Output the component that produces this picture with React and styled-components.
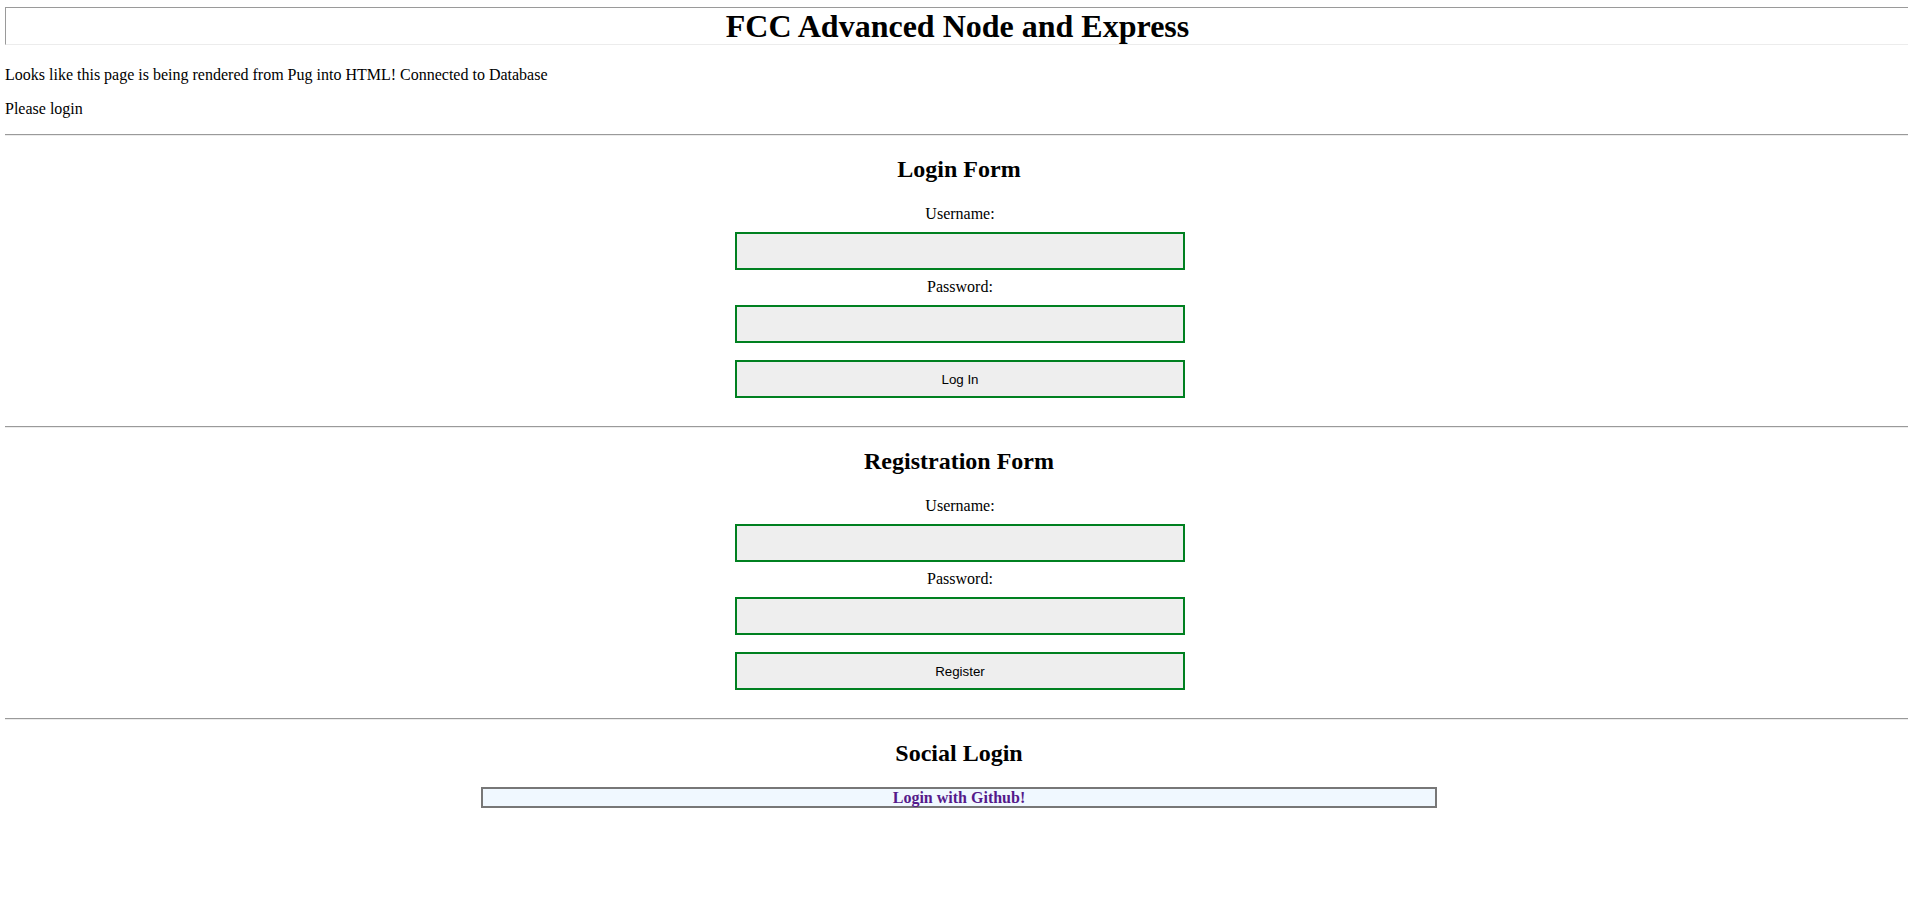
import React from "react";
import styled, { createGlobalStyle } from "styled-components";

const GlobalStyle = createGlobalStyle`
  html, body {
    margin: 0;
    padding: 0;
    background: #fff;
    overflow-x: hidden;
  }
  body {
    font-family: "Liberation Serif", "Times New Roman", serif;
    font-size: 16px;
    color: #000;
  }
`;

const Page = styled.div`
  width: 100vw;
  margin-left: 5px;
  padding-top: 7px;
  padding-bottom: 40px;
`;

const Header = styled.header`
  height: 36px;
  border-top: 1px solid #9a9a9a;
  border-left: 1px solid #9a9a9a;
  border-bottom: 1px solid #ececec;
  border-right: 1px solid #ececec;
  h1 {
    margin: 0;
    font-size: 32px;
    line-height: 36px;
    font-weight: bold;
    text-align: center;
    padding-right: 3px;
  }
`;

const Intro = styled.div`
  display: flex;
  flex-direction: column;
  gap: 16px;
  padding-top: 21px;
  p {
    margin: 0;
    line-height: 18px;
  }
`;

const Divider = styled.hr`
  margin: ${({ $top }) => $top || 0}px 0 0;
  height: 0;
  border: 0;
  border-top: 1px solid #9a9a9a;
  border-bottom: 1px solid #ececec;
`;

const Section = styled.section`
  display: flex;
  flex-direction: column;
  align-items: center;
  padding: 19px 0 ${({ $bottom }) => $bottom ?? 28}px;
  h2 {
    margin: 0 0 20px;
    font-size: 24px;
    line-height: 28px;
    font-weight: bold;
  }
`;

const Form = styled.form`
  display: flex;
  flex-direction: column;
  align-items: center;
  padding-top: 2px;
  padding-left: 2px;
`;

const Label = styled.label`
  line-height: 18px;
`;

const Input = styled.input`
  box-sizing: border-box;
  width: 450px;
  height: 38px;
  margin: 9px 0 8px;
  background: #eee;
  border: 2px solid #008020;
  outline: none;
`;

const Button = styled.button`
  box-sizing: border-box;
  width: 450px;
  height: 38px;
  margin-top: 9px;
  background: #eee;
  border: 2px solid #008020;
  font-family: "Liberation Sans", Arial, sans-serif;
  font-size: 13.33px;
  color: #000;
  cursor: pointer;
`;

const GithubLink = styled.a`
  display: block;
  box-sizing: border-box;
  width: calc(50% + 2px);
  margin-top: 0;
  border: 2px solid #777;
  background: #f0f8ff;
  color: #551a8b;
  font-weight: bold;
  line-height: 17px;
  text-align: center;
  text-decoration: none;
`;

const forms = [
  { title: "Login Form", action: "/login", submit: "Log In" },
  { title: "Registration Form", action: "/register", submit: "Register" },
];

export default function App() {
  return (
    <>
      <GlobalStyle />
      <Page>
        <Header>
          <h1>FCC Advanced Node and Express</h1>
        </Header>
        <Intro>
          <p>Looks like this page is being rendered from Pug into HTML! Connected to Database</p>
          <p>Please login</p>
        </Intro>
        <Divider $top={16} />
        {forms.map(({ title, action, submit }) => (
          <React.Fragment key={title}>
            <Section>
              <h2>{title}</h2>
              <Form action={action} method="post" onSubmit={(e) => e.preventDefault()}>
                <Label>Username:</Label>
                <Input type="text" name="username" />
                <Label>Password:</Label>
                <Input type="password" name="password" />
                <Button type="submit">{submit}</Button>
              </Form>
            </Section>
            <Divider />
          </React.Fragment>
        ))}
        <Section $bottom={0}>
          <h2>Social Login</h2>
          <GithubLink href="#github">Login with Github!</GithubLink>
        </Section>
      </Page>
    </>
  );
}
